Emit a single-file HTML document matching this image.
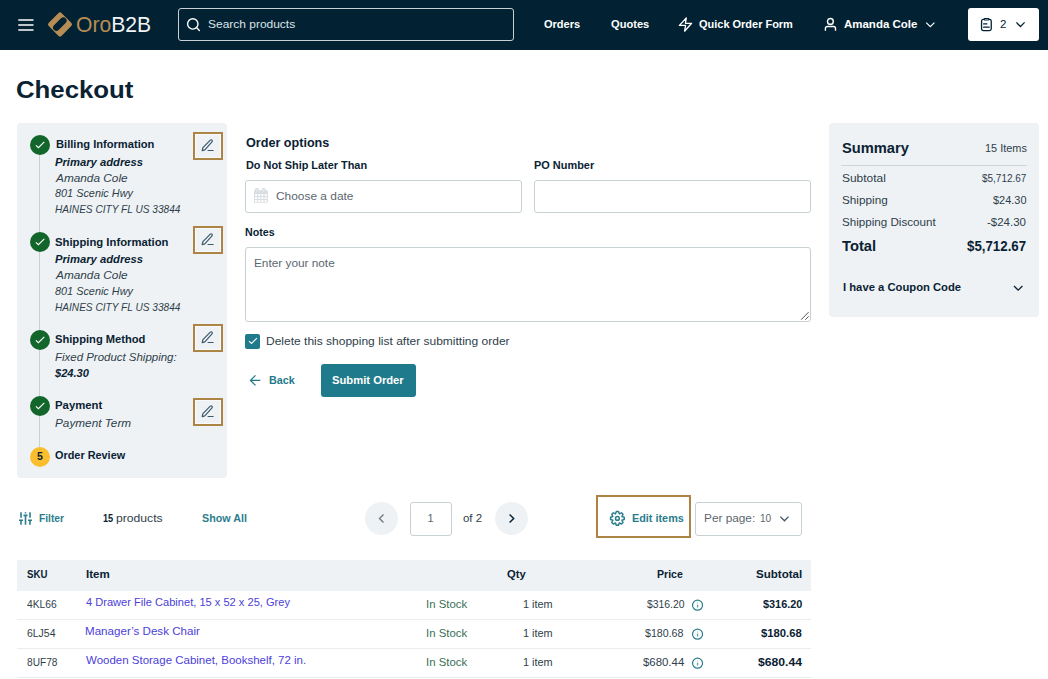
<!DOCTYPE html>
<html><head><meta charset="utf-8">
<style>
*{box-sizing:border-box;margin:0;padding:0}
html,body{width:1048px;height:679px;overflow:hidden;background:#fff}
body{font-family:"Liberation Sans",sans-serif;color:#0a2233;position:relative}
.t{position:absolute;white-space:nowrap;line-height:1;transform-origin:0 0}
.box{position:absolute}
svg{position:absolute;overflow:visible}
#hdr{position:absolute;left:0;top:0;width:1048px;height:50px;background:#022233}
.panel{position:absolute;background:#eef2f5;border-radius:4px}
.edit{position:absolute;width:30px;height:28px;border:2px solid #ad8443;box-shadow:inset 0 0 0 1px #f7f9fa}
.chk{position:absolute;width:20px;height:20px;border-radius:50%;background:#12652b}
.inp{position:absolute;border:1px solid #c8d1d4;border-radius:3px;background:#fff}
</style></head><body>
<div id="hdr"></div>
<svg style="left:0;top:0" width="50" height="50"><g stroke="#fff" stroke-width="1.5"><line x1="18.3" y1="20" x2="33.5" y2="20"/><line x1="18.3" y1="25" x2="33.5" y2="25"/><line x1="18.3" y1="30" x2="33.5" y2="30"/></g></svg>
<svg style="left:44px;top:8px" width="32" height="32" viewBox="0 0 32 32">
 <rect x="6.85" y="7.25" width="18.3" height="18.3" rx="2.4" fill="#b58d55" transform="rotate(45 16 16.4)"/>
 <rect x="7.6" y="12.9" width="16.4" height="6.5" rx="3.25" fill="#022233" transform="rotate(-45 15.8 16.15)"/>
</svg>
<div class="box" style="left:178px;top:8px;width:336px;height:33px;border:1px solid #c9d0d4;border-radius:3px"></div>
<svg style="left:186px;top:17px" width="15" height="15" viewBox="0 0 15 15"><circle cx="6.8" cy="6.9" r="5.2" fill="none" stroke="#fff" stroke-width="1.4"/><line x1="10.5" y1="10.6" x2="13.3" y2="13.4" stroke="#fff" stroke-width="1.4" stroke-linecap="round"/></svg>
<svg style="left:678px;top:17px" width="15" height="15" viewBox="0 0 15 15"><path d="M8.3 1 L1.4 8.4 H7.6 L6.6 14.2 L13.6 6.3 H7.4 Z" fill="none" stroke="#fff" stroke-width="1.3" stroke-linejoin="round"/></svg>
<svg style="left:823px;top:18px" width="14" height="14" viewBox="0 0 14 14"><circle cx="7.4" cy="3.4" r="2.9" fill="none" stroke="#fff" stroke-width="1.4"/><path d="M2.4 12.8 V10.5 A2 2 0 0 1 4.4 8.5 H10.5 A2 2 0 0 1 12.5 10.5 V12.8" fill="none" stroke="#fff" stroke-width="1.4"/></svg>
<svg style="left:925px;top:21px" width="11" height="7" viewBox="0 0 11 7"><path d="M1.2 1.6 L5.3 5.6 L9.4 1.6" fill="none" stroke="#fff" stroke-width="1.2"/></svg>
<div class="box" style="left:968px;top:8px;width:71px;height:33px;background:#fff;border-radius:3px"></div>
<svg style="left:979px;top:17px" width="14" height="15" viewBox="0 0 14 15"><rect x="2.55" y="2.35" width="9.7" height="11.2" rx="1.8" fill="none" stroke="#022233" stroke-width="1.3"/><rect x="5.2" y="1.5" width="4.7" height="1.5" rx="0.75" fill="#fff" stroke="#022233" stroke-width="1.2"/><path d="M4.6 6.9 H7.9 M4.6 10.2 H10.2" stroke="#022233" stroke-width="1.2" stroke-linecap="round"/></svg>
<svg style="left:1015px;top:21px" width="11" height="7" viewBox="0 0 11 7"><path d="M1.4 1.4 L5.5 5.5 L9.6 1.4" fill="none" stroke="#022233" stroke-width="1.25"/></svg>

<div class="panel" style="left:17px;top:123px;width:210px;height:355px"></div>
<div class="box" style="left:39px;top:155px;width:1px;height:292px;background:#c9d0d5"></div>
<div class="chk" style="left:30px;top:135px"></div>
<div class="chk" style="left:30px;top:232px"></div>
<div class="chk" style="left:30px;top:329.5px"></div>
<div class="chk" style="left:30px;top:396px"></div>
<svg style="left:30px;top:135px" width="20" height="20"><path d="M5.9 10.3 L8.4 12.7 L14.3 6.8" fill="none" stroke="#fff" stroke-width="1.15"/></svg>
<svg style="left:30px;top:232px" width="20" height="20"><path d="M5.9 10.3 L8.4 12.7 L14.3 6.8" fill="none" stroke="#fff" stroke-width="1.15"/></svg>
<svg style="left:30px;top:329.5px" width="20" height="20"><path d="M5.9 10.3 L8.4 12.7 L14.3 6.8" fill="none" stroke="#fff" stroke-width="1.15"/></svg>
<svg style="left:30px;top:396px" width="20" height="20"><path d="M5.9 10.3 L8.4 12.7 L14.3 6.8" fill="none" stroke="#fff" stroke-width="1.15"/></svg>
<div class="box" style="left:30px;top:446.5px;width:20px;height:20px;border-radius:50%;background:#fbbe2f"></div>
<div class="edit" style="left:193px;top:132px"></div>
<div class="edit" style="left:193px;top:226px"></div>
<div class="edit" style="left:193px;top:324px"></div>
<div class="edit" style="left:193px;top:398px"></div>
<svg style="left:201px;top:139px" width="13" height="12"><path d="M1.2 11.6 L1.9 8.7 L9.3 1.2 A1.2 1.2 0 0 1 11 2.9 L3.8 10.9 Z M6.6 11.5 H12.6" fill="none" stroke="#3d5a6c" stroke-width="1.2" stroke-linejoin="round"/></svg>
<svg style="left:201px;top:233px" width="13" height="12"><path d="M1.2 11.6 L1.9 8.7 L9.3 1.2 A1.2 1.2 0 0 1 11 2.9 L3.8 10.9 Z M6.6 11.5 H12.6" fill="none" stroke="#3d5a6c" stroke-width="1.2" stroke-linejoin="round"/></svg>
<svg style="left:201px;top:331px" width="13" height="12"><path d="M1.2 11.6 L1.9 8.7 L9.3 1.2 A1.2 1.2 0 0 1 11 2.9 L3.8 10.9 Z M6.6 11.5 H12.6" fill="none" stroke="#3d5a6c" stroke-width="1.2" stroke-linejoin="round"/></svg>
<svg style="left:201px;top:405px" width="13" height="12"><path d="M1.2 11.6 L1.9 8.7 L9.3 1.2 A1.2 1.2 0 0 1 11 2.9 L3.8 10.9 Z M6.6 11.5 H12.6" fill="none" stroke="#3d5a6c" stroke-width="1.2" stroke-linejoin="round"/></svg>

<div class="inp" style="left:245px;top:180px;width:277px;height:33px"></div>
<div class="inp" style="left:534px;top:180px;width:277px;height:33px"></div>
<svg style="left:253px;top:187px" width="16" height="17"><g fill="#d9dee2"><rect x="1" y="3.2" width="13.8" height="12.5" rx="1"/><rect x="2.2" y="1.1" width="3.6" height="4" rx="1"/><rect x="8.8" y="1.1" width="3.6" height="4" rx="1"/></g><g fill="#fff"><rect x="2.1" y="7" width="2" height="2"/><rect x="2.1" y="10" width="2" height="2"/><rect x="2.1" y="13" width="2" height="2"/><rect x="5.3" y="7" width="2" height="2"/><rect x="5.3" y="10" width="2" height="2"/><rect x="5.3" y="13" width="2" height="2"/><rect x="8.4" y="7" width="2" height="2"/><rect x="8.4" y="10" width="2" height="2"/><rect x="8.4" y="13" width="2" height="2"/><rect x="11.6" y="7" width="2" height="2"/><rect x="11.6" y="10" width="2" height="2"/><rect x="11.6" y="13" width="2" height="2"/></g><g fill="#eef1f3"><rect x="3.6" y="2" width="0.9" height="2.6"/><rect x="10.2" y="2" width="0.9" height="2.6"/></g></svg>
<div class="inp" style="left:245px;top:247px;width:566px;height:75px"></div>
<svg style="left:800px;top:311px" width="10" height="10"><path d="M1.2 8.7 L8.6 1.1 M5.3 8.7 L8.6 5.3" stroke="#5a5a5a" stroke-width="1"/></svg>
<div class="box" style="left:245px;top:334px;width:15px;height:15px;border-radius:2px;background:#1f7a8b"></div>
<svg style="left:245px;top:334px" width="15" height="15"><path d="M4 7.2 L6.5 9.5 L11.9 4.2" fill="none" stroke="#fff" stroke-width="1.1"/></svg>
<svg style="left:249px;top:375px" width="12" height="11"><path d="M11.3 5.4 H1.6 M6.5 0.4 L1.5 5.4 L6.5 10.4" fill="none" stroke="#1f7a8b" stroke-width="1.3"/></svg>
<div class="box" style="left:321px;top:364px;width:95px;height:33px;border-radius:3px;background:#1f7a8b"></div>

<div class="panel" style="left:829px;top:123px;width:210px;height:194px"></div>
<div class="box" style="left:841px;top:165px;width:186px;height:1px;background:#cfd6da"></div>
<svg style="left:1013px;top:285px" width="11" height="7"><path d="M1 1 L5.2 5.2 L9.4 1" fill="none" stroke="#0a2233" stroke-width="1.3"/></svg>

<svg style="left:19px;top:512px" width="13" height="13"><g stroke="#2b7d8c" stroke-width="1.6" fill="none"><path d="M2 0.2 V5.8 M0 8.3 H4 M2 8.3 V12.8"/><path d="M6.5 0.2 V1.6 M4.5 3.4 H8.5 M6.5 3.4 V12.8"/><path d="M11 0.2 V5.8 M9 8.3 H13 M11 8.3 V12.8"/></g></svg>
<div class="box" style="left:365px;top:502px;width:33px;height:33px;border-radius:50%;background:#eef2f5"></div>
<svg style="left:377px;top:513px" width="8" height="11"><path d="M6.5 1.5 L2.5 5.5 L6.5 9.5" fill="none" stroke="#6d7a83" stroke-width="1.4"/></svg>
<div class="inp" style="left:410px;top:502px;width:42px;height:34px"></div>
<div class="box" style="left:495px;top:502px;width:33px;height:33px;border-radius:50%;background:#eef2f5"></div>
<svg style="left:507px;top:513px" width="8" height="11"><path d="M2.6 1.5 L6.7 5.5 L2.6 9.5" fill="none" stroke="#0a2233" stroke-width="1.5"/></svg>
<div class="box" style="left:596px;top:495px;width:95px;height:43px;border:2px solid #ad8443"></div>
<svg style="left:609px;top:510px" width="17" height="17"><path d="M7.32 1.58 L9.48 1.58 L10.28 3.87 L12.46 2.82 L13.98 4.34 L12.93 6.52 L15.22 7.32 L15.22 9.48 L12.93 10.28 L13.98 12.46 L12.46 13.98 L10.28 12.93 L9.48 15.22 L7.32 15.22 L6.52 12.93 L4.34 13.98 L2.82 12.46 L3.87 10.28 L1.58 9.48 L1.58 7.32 L3.87 6.52 L2.82 4.34 L4.34 2.82 L6.52 3.87 Z" fill="none" stroke="#2b7d8c" stroke-width="1.5" stroke-linejoin="round"/><circle cx="8.4" cy="8.4" r="1.9" fill="none" stroke="#2b7d8c" stroke-width="1.5"/></svg>
<div class="inp" style="left:695px;top:502px;width:107px;height:34px"></div>
<svg style="left:779px;top:516px" width="11" height="7"><path d="M1.3 0.6 L5.5 4.8 L9.5 0.6" fill="none" stroke="#3f5664" stroke-width="1.3"/></svg>

<div class="box" style="left:17px;top:560px;width:794px;height:31px;background:#eef2f5"></div>
<div class="box" style="left:17px;top:619px;width:794px;height:1px;background:#eaedf0"></div>
<div class="box" style="left:17px;top:648px;width:794px;height:1px;background:#eaedf0"></div>
<div class="box" style="left:17px;top:677px;width:794px;height:1px;background:#eaedf0"></div>
<svg style="left:691.5px;top:598.7px" width="11" height="12"><circle cx="5.55" cy="6.2" r="5.0" fill="none" stroke="#2b7d8c" stroke-width="1.2"/><path d="M5.55 5.6 V8.5" stroke="#2b7d8c" stroke-width="1.3" opacity=".75"/><path d="M5.55 3.5 V4.4" stroke="#2b7d8c" stroke-width="1.2" opacity=".45"/></svg>
<svg style="left:691.5px;top:627.8px" width="11" height="12"><circle cx="5.55" cy="6.2" r="5.0" fill="none" stroke="#2b7d8c" stroke-width="1.2"/><path d="M5.55 5.6 V8.5" stroke="#2b7d8c" stroke-width="1.3" opacity=".75"/><path d="M5.55 3.5 V4.4" stroke="#2b7d8c" stroke-width="1.2" opacity=".45"/></svg>
<svg style="left:691.5px;top:656.7px" width="11" height="12"><circle cx="5.55" cy="6.2" r="5.0" fill="none" stroke="#2b7d8c" stroke-width="1.2"/><path d="M5.55 5.6 V8.5" stroke="#2b7d8c" stroke-width="1.3" opacity=".75"/><path d="M5.55 3.5 V4.4" stroke="#2b7d8c" stroke-width="1.2" opacity=".45"/></svg>
<div class="t" id="logo" style="left:76.03px;top:14.00px;font-size:21.7px;color:#b58d55;transform:scaleX(0.9737);">Oro<span style="color:#f2f4f5">B2B</span></div>
<div class="t" id="srch" style="left:208.49px;top:19.00px;font-size:11.5px;color:#dde3e7;transform:scaleX(1.0406);">Search products</div>
<div class="t" id="nav1" style="left:544.00px;top:19.00px;font-size:11.5px;color:#fff;font-weight:bold;transform:scaleX(0.9586);">Orders</div>
<div class="t" id="nav2" style="left:610.53px;top:19.00px;font-size:11.5px;color:#fff;font-weight:bold;transform:scaleX(0.9661);">Quotes</div>
<div class="t" id="nav3" style="left:699.47px;top:19.00px;font-size:11.5px;color:#fff;font-weight:bold;transform:scaleX(0.9539);">Quick Order Form</div>
<div class="t" id="nav4" style="left:844.00px;top:19.00px;font-size:11.5px;color:#fff;font-weight:bold;transform:scaleX(0.9977);">Amanda Cole</div>
<div class="t" id="cnt" style="left:1000.00px;top:19.00px;font-size:11.5px;color:#022233;">2</div>
<div class="t" id="title" style="left:16.47px;top:78.00px;font-size:24px;color:#0b2233;font-weight:bold;transform:scaleX(1.0738);">Checkout</div>
<div class="t" id="s1" style="left:55.51px;top:139.00px;font-size:11px;color:#0a2233;font-weight:bold;transform:scaleX(1.0126);">Billing Information</div>
<div class="t" id="s2" style="left:55.00px;top:157.00px;font-size:11px;color:#0a2233;font-weight:bold;font-style:italic;transform:scaleX(1.0212);">Primary address</div>
<div class="t" id="s3" style="left:56.07px;top:173.00px;font-size:11px;color:#2f3e4a;font-style:italic;transform:scaleX(1.0741);">Amanda Cole</div>
<div class="t" id="s4" style="left:55.00px;top:188.00px;font-size:11px;color:#2f3e4a;font-style:italic;transform:scaleX(0.9880);">801 Scenic Hwy</div>
<div class="t" id="s5" style="left:55.00px;top:204.00px;font-size:11px;color:#2f3e4a;font-style:italic;transform:scaleX(0.9184);">HAINES CITY FL US 33844</div>
<div class="t" id="s6" style="left:55.00px;top:237.00px;font-size:11px;color:#0a2233;font-weight:bold;transform:scaleX(1.0254);">Shipping Information</div>
<div class="t" id="s7" style="left:55.00px;top:254.00px;font-size:11px;color:#0a2233;font-weight:bold;font-style:italic;transform:scaleX(1.0212);">Primary address</div>
<div class="t" id="s8" style="left:56.07px;top:270.00px;font-size:11px;color:#2f3e4a;font-style:italic;transform:scaleX(1.0741);">Amanda Cole</div>
<div class="t" id="s9" style="left:55.00px;top:286.00px;font-size:11px;color:#2f3e4a;font-style:italic;transform:scaleX(0.9880);">801 Scenic Hwy</div>
<div class="t" id="s10" style="left:55.00px;top:302.00px;font-size:11px;color:#2f3e4a;font-style:italic;transform:scaleX(0.9184);">HAINES CITY FL US 33844</div>
<div class="t" id="s11" style="left:55.00px;top:334.00px;font-size:11px;color:#0a2233;font-weight:bold;transform:scaleX(1.0138);">Shipping Method</div>
<div class="t" id="s12" style="left:55.00px;top:352.00px;font-size:11px;color:#2f3e4a;font-style:italic;transform:scaleX(1.0412);">Fixed Product Shipping:</div>
<div class="t" id="s13" style="left:55.00px;top:368.00px;font-size:11px;color:#0a2233;font-weight:bold;font-style:italic;transform:scaleX(1.0074);">$24.30</div>
<div class="t" id="s14" style="left:55.00px;top:400.00px;font-size:11px;color:#0a2233;font-weight:bold;transform:scaleX(1.0317);">Payment</div>
<div class="t" id="s15" style="left:55.00px;top:418.00px;font-size:11px;color:#2f3e4a;font-style:italic;transform:scaleX(1.0704);">Payment Term</div>
<div class="t" id="s16" style="left:55.00px;top:450.00px;font-size:11px;color:#0a2233;font-weight:bold;transform:scaleX(0.9892);">Order Review</div>
<div class="t" id="s17" style="left:36.90px;top:451.00px;font-size:10.5px;color:#0a2233;font-weight:bold;">5</div>
<div class="t" id="f1" style="left:245.50px;top:137.00px;font-size:12px;color:#0a2233;font-weight:bold;transform:scaleX(1.0502);">Order options</div>
<div class="t" id="f2" style="left:245.51px;top:160.00px;font-size:11px;color:#0a2233;font-weight:bold;transform:scaleX(0.9903);">Do Not Ship Later Than</div>
<div class="t" id="f3" style="left:534.49px;top:160.00px;font-size:11px;color:#0a2233;font-weight:bold;transform:scaleX(0.9942);">PO Number</div>
<div class="t" id="f4" style="left:276.00px;top:191.00px;font-size:11px;color:#5b6770;transform:scaleX(1.0821);">Choose a date</div>
<div class="t" id="f5" style="left:245.49px;top:227.00px;font-size:11px;color:#0a2233;font-weight:bold;transform:scaleX(0.9677);">Notes</div>
<div class="t" id="f6" style="left:253.94px;top:258.00px;font-size:11px;color:#5b6770;transform:scaleX(1.0731);">Enter your note</div>
<div class="t" id="f7" style="left:265.94px;top:336.00px;font-size:11px;color:#2f3e4a;transform:scaleX(1.0915);">Delete this shopping list after submitting order</div>
<div class="t" id="f8" style="left:268.96px;top:375.00px;font-size:11px;color:#1f7a8b;font-weight:bold;transform:scaleX(0.9806);">Back</div>
<div class="t" id="f9" style="left:332.48px;top:375.00px;font-size:11px;color:#fff;font-weight:bold;transform:scaleX(1.0203);">Submit Order</div>
<div class="t" id="m1" style="left:841.98px;top:141.00px;font-size:14.5px;color:#0a2233;font-weight:bold;transform:scaleX(1.0126);">Summary</div>
<div class="t" id="m2" style="left:985.00px;top:143.00px;font-size:11px;color:#2f3e4a;transform:scaleX(0.9921);">15 Items</div>
<div class="t" id="m3" style="left:841.97px;top:173.00px;font-size:11px;color:#2f3e4a;transform:scaleX(1.0856);">Subtotal</div>
<div class="t" id="m4" style="left:982.47px;top:173.00px;font-size:11px;color:#2f3e4a;transform:scaleX(0.9070);">$5,712.67</div>
<div class="t" id="m5" style="left:842.00px;top:195.00px;font-size:11px;color:#2f3e4a;transform:scaleX(1.0677);">Shipping</div>
<div class="t" id="m6" style="left:992.99px;top:195.00px;font-size:11px;color:#2f3e4a;transform:scaleX(0.9958);">$24.30</div>
<div class="t" id="m7" style="left:841.95px;top:217.00px;font-size:11px;color:#2f3e4a;transform:scaleX(1.0565);">Shipping Discount</div>
<div class="t" id="m8" style="left:987.49px;top:217.00px;font-size:11px;color:#2f3e4a;transform:scaleX(1.0439);">-$24.30</div>
<div class="t" id="m9" style="left:841.93px;top:239.00px;font-size:14.5px;color:#0a2233;font-weight:bold;transform:scaleX(1.0146);">Total</div>
<div class="t" id="m10" style="left:967.00px;top:239.00px;font-size:14.5px;color:#0a2233;font-weight:bold;transform:scaleX(0.9164);">$5,712.67</div>
<div class="t" id="m11" style="left:842.50px;top:282.00px;font-size:11px;color:#0a2233;font-weight:bold;transform:scaleX(1.0226);">I have a Coupon Code</div>
<div class="t" id="b1" style="left:39.05px;top:513.00px;font-size:11px;color:#2b7d8c;font-weight:bold;transform:scaleX(0.9302);">Filter</div>
<div class="t" id="b2" style="left:103.07px;top:513.00px;font-size:11px;color:#0a2233;font-weight:bold;transform:scaleX(0.8333);">15</div>
<div class="t" id="b3" style="left:115.95px;top:513.00px;font-size:11px;color:#2f3e4a;transform:scaleX(1.1062);">products</div>
<div class="t" id="b4" style="left:202.48px;top:513.00px;font-size:11px;color:#2b7d8c;font-weight:bold;transform:scaleX(0.9748);">Show All</div>
<div class="t" id="b5" style="left:427.50px;top:513.00px;font-size:11px;color:#5b6770;">1</div>
<div class="t" id="b6" style="left:463.46px;top:513.00px;font-size:11px;color:#2f3e4a;transform:scaleX(1.0420);">of 2</div>
<div class="t" id="b7" style="left:631.97px;top:513.00px;font-size:11px;color:#2b7d8c;font-weight:bold;transform:scaleX(0.9853);">Edit items</div>
<div class="t" id="b8" style="left:704.00px;top:513.00px;font-size:11px;color:#5b6770;transform:scaleX(1.0737);">Per page:</div>
<div class="t" id="b9" style="left:759.54px;top:513.00px;font-size:11px;color:#5b6770;transform:scaleX(0.9167);">10</div>
<div class="t" id="h1" style="left:26.91px;top:569.00px;font-size:11px;color:#0a2233;font-weight:bold;transform:scaleX(0.8772);">SKU</div>
<div class="t" id="h2" style="left:86.44px;top:569.00px;font-size:11px;color:#0a2233;font-weight:bold;transform:scaleX(1.0512);">Item</div>
<div class="t" id="h3" style="left:507.00px;top:569.00px;font-size:11px;color:#0a2233;font-weight:bold;transform:scaleX(1.0165);">Qty</div>
<div class="t" id="h4" style="left:657.49px;top:569.00px;font-size:11px;color:#0a2233;font-weight:bold;transform:scaleX(0.9584);">Price</div>
<div class="t" id="h5" style="left:756.00px;top:569.00px;font-size:11px;color:#0a2233;font-weight:bold;transform:scaleX(1.0510);">Subtotal</div>
<div class="t" id="r0a" style="left:26.95px;top:599.00px;font-size:11px;color:#2f3e4a;transform:scaleX(0.9332);">4KL66</div>
<div class="t" id="r0b" style="left:86.49px;top:597.00px;font-size:11px;color:#4b41d8;transform:scaleX(1.0080);">4 Drawer File Cabinet, 15 x 52 x 25, Grey</div>
<div class="t" id="r0c" style="left:426.47px;top:599.00px;font-size:11px;color:#3a6f58;transform:scaleX(1.0365);">In Stock</div>
<div class="t" id="r0d" style="left:522.99px;top:599.00px;font-size:11px;color:#2f3e4a;transform:scaleX(0.9898);">1 item</div>
<div class="t" id="r0e" style="left:646.53px;top:599.00px;font-size:11px;color:#2f3e4a;transform:scaleX(0.9450);">$316.20</div>
<div class="t" id="r0f" style="left:762.50px;top:599.00px;font-size:11px;color:#0a2233;font-weight:bold;transform:scaleX(0.9906);">$316.20</div>
<div class="t" id="r1a" style="left:26.92px;top:628.00px;font-size:11px;color:#2f3e4a;transform:scaleX(0.9499);">6LJ54</div>
<div class="t" id="r1b" style="left:85.46px;top:626.00px;font-size:11px;color:#4b41d8;transform:scaleX(1.0535);">Manager&#8217;s Desk Chair</div>
<div class="t" id="r1c" style="left:426.47px;top:628.00px;font-size:11px;color:#3a6f58;transform:scaleX(1.0365);">In Stock</div>
<div class="t" id="r1d" style="left:522.99px;top:628.00px;font-size:11px;color:#2f3e4a;transform:scaleX(0.9898);">1 item</div>
<div class="t" id="r1e" style="left:645.47px;top:628.00px;font-size:11px;color:#2f3e4a;transform:scaleX(0.9668);">$180.68</div>
<div class="t" id="r1f" style="left:761.00px;top:628.00px;font-size:11px;color:#0a2233;font-weight:bold;transform:scaleX(1.0250);">$180.68</div>
<div class="t" id="r2a" style="left:27.04px;top:657.00px;font-size:11px;color:#2f3e4a;transform:scaleX(0.9222);">8UF78</div>
<div class="t" id="r2b" style="left:86.48px;top:655.00px;font-size:11px;color:#4b41d8;transform:scaleX(1.0448);">Wooden Storage Cabinet, Bookshelf, 72 in.</div>
<div class="t" id="r2c" style="left:426.47px;top:657.00px;font-size:11px;color:#3a6f58;transform:scaleX(1.0365);">In Stock</div>
<div class="t" id="r2d" style="left:522.99px;top:657.00px;font-size:11px;color:#2f3e4a;transform:scaleX(0.9898);">1 item</div>
<div class="t" id="r2e" style="left:642.97px;top:657.00px;font-size:11px;color:#2f3e4a;transform:scaleX(1.0368);">$680.44</div>
<div class="t" id="r2f" style="left:757.97px;top:657.00px;font-size:11px;color:#0a2233;font-weight:bold;transform:scaleX(1.1062);">$680.44</div>
</body></html>
